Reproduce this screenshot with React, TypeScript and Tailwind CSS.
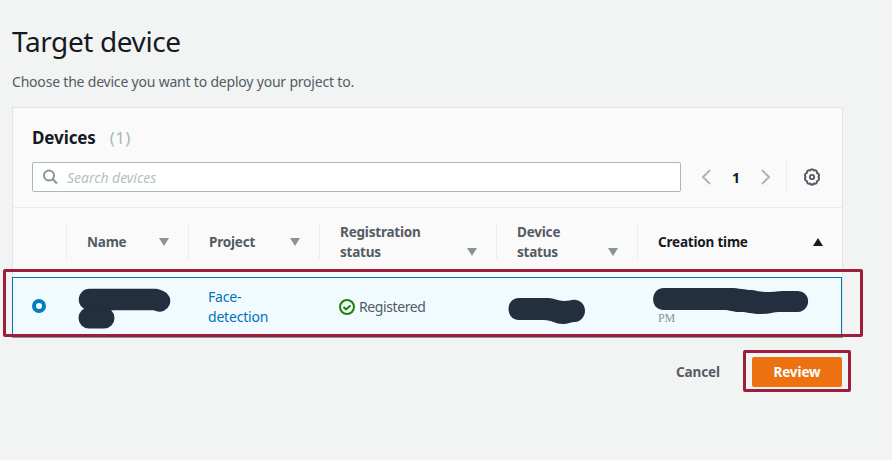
import React from "react";

type SortProps = { up?: boolean; className?: string };

function SortArrow({ up, className = "" }: SortProps) {
  return (
    <svg width="10" height="8" viewBox="0 0 10 8" className={`shrink-0 ${className}`}>
      {up ? <path d="M5 0 10 8H0Z" fill="#16191f" /> : <path d="M0 0h10L5 8Z" fill="#879596" />}
    </svg>
  );
}

function Separator() {
  return <div className="h-[34px] w-px shrink-0 self-center bg-[#eaeded]" />;
}

function Toolbar() {
  return (
    <div className="flex h-[30px] items-center pl-5">
      <div className="flex h-[30px] w-[649px] items-center rounded-[2px] border border-[#aab7b8] bg-white pl-[9px]">
        <svg width="16" height="16" viewBox="0 0 16 16" fill="none" stroke="#879596" strokeWidth="2">
          <circle cx="7" cy="6.5" r="5" />
          <path d="m10.5 10 4.5 4.5" />
        </svg>
        <span className="ml-[9px] pt-px text-[14px] tracking-[-0.04px] text-[#b5c0c1] italic">Search devices</span>
      </div>
      <svg width="10" height="16" viewBox="0 0 10 16" fill="none" stroke="#aab7b8" strokeWidth="2" className="ml-5">
        <path d="M9 1 2 8l7 7" />
      </svg>
      <span className="w-[50px] text-center text-[14px] font-bold text-[#16191f]">1</span>
      <svg width="10" height="16" viewBox="0 0 10 16" fill="none" stroke="#aab7b8" strokeWidth="2">
        <path d="m1 1 7 7-7 7" />
      </svg>
      <div className="ml-[15px] h-[30px] w-px bg-[#eaeded]" />
      <svg width="18" height="18" viewBox="0.6 0.6 16.8 16.8" fill="none" stroke="#545b64" className="ml-4">
        <path
          d="M7.1 2.9Q9 .7 10.9 2.9Q13.8 2.3 13.7 5.2Q16.5 6.3 15.1 9Q16.5 11.7 13.8 12.8Q13.8 15.7 10.9 15.1Q9 17.3 7.1 15.1Q4.2 15.7 4.2 12.8Q1.5 11.7 2.9 9Q1.5 6.3 4.2 5.2Q4.2 2.3 7.1 2.9Z"
          strokeWidth="1.9"
          strokeLinejoin="round"
        />
        <circle cx="9" cy="9" r="2" strokeWidth="1.8" />
      </svg>
    </div>
  );
}

function TableHead() {
  return (
    <div className="flex h-[70px] items-center border-t border-[#eaeded] pb-[2px] text-[13.5px] leading-5 font-bold tracking-[-0.2px] text-[#545b64]">
      <div className="w-[54px]" />
      <Separator />
      <div className="flex w-[121px] items-center justify-between pr-[19px] pl-5">
        <span>Name</span>
        <SortArrow />
      </div>
      <Separator />
      <div className="flex w-[130px] items-center justify-between pr-[19px] pl-5">
        <span>Project</span>
        <SortArrow />
      </div>
      <Separator />
      <div className="flex w-[176px] items-end justify-between pr-[19px] pl-5">
        <span>Registration<br />status</span>
        <SortArrow className="mb-[6px]" />
      </div>
      <Separator />
      <div className="flex w-[140px] items-end justify-between pr-[19px] pl-5">
        <span>Device<br />status</span>
        <SortArrow className="mb-[6px]" />
      </div>
      <Separator />
      <div className="flex flex-1 items-center justify-between pr-[19px] pl-5 text-[#16191f]">
        <span>Creation time</span>
        <SortArrow up />
      </div>
    </div>
  );
}

function DeviceRow() {
  return (
    <div className="flex h-[60px] items-center border border-[#0073bb] bg-[#f1faff] text-[14px] leading-5 tracking-[-0.2px]">
      <div className="w-[65px] pb-[2px] pl-[19px]">
        <div className="h-[14px] w-[14px] rounded-full border-[4px] border-[#007dbc] bg-white" />
      </div>
      <div className="w-[130px]">
        <svg width="94" height="42" viewBox="0 0 94 42" fill="none" stroke="#232f3e" strokeLinecap="round" strokeLinejoin="round" className="mt-1">
          <path d="M11.5 11.5h66l4 1.5" strokeWidth="21.5" />
          <path d="M11 30h15" strokeWidth="21" />
        </svg>
      </div>
      <div className="w-[131px] text-[#0073bb]">Face-<br />detection</div>
      <div className="flex w-[169px] items-center">
        <svg width="16" height="16" viewBox="0 0 16 16" fill="none" stroke="#1d8102" strokeWidth="2">
          <circle cx="8" cy="8" r="7" />
          <path d="m4.5 8 2.5 2.5 4.5-4" />
        </svg>
        <span className="ml-1 tracking-[-0.4px] text-[#545b64]">Registered</span>
      </div>
      <div className="w-[145px]">
        <svg width="78" height="27" viewBox="0 0 78 27" className="mt-[7px]">
          <path d="M11 1h29c6 0 10 3 16 3s8-2 12-1c6 1 9 6 9 11 0 6-5 11-10 11-4 0-7 2-12 2-8 0-11-4-19-4H11C-3 23-3 1 11 1Z" fill="#232f3e" />
        </svg>
      </div>
      <div className="flex flex-col">
        <svg width="156" height="26" viewBox="0 0 156 26" className="-mt-[2px]">
          <path d="M11 0h66c9 0 15 2 22 2 6 1 8 2 16 2s9-1 16-1h14c14 1 13 20 0 21h-17c-9 0-10 2-20 2S95 24 87 24s-9-2-17-2H11C-4 22-3 0 11 0Z" fill="#232f3e" />
        </svg>
        <span className="-mt-[3px] ml-[5px] h-[14px] font-['Liberation_Serif',serif] text-[12px] leading-[14px] tracking-[-0.2px] text-[#879596]">PM</span>
      </div>
    </div>
  );
}

export default function App() {
  return (
    <main className="relative h-[460px] w-[892px] overflow-hidden bg-[#f2f3f3] pl-3 font-['Noto_Sans','Open_Sans',sans-serif]">
      <h1 className="pt-[23px] text-[28px] leading-9 text-[#16191f]"><span className="tracking-[-0.4px]">Target device</span></h1>
      <p className="mt-[13px] text-[14px] leading-5 tracking-[-0.2px] text-[#545b64]">Choose the device you want to deploy your project to.</p>
      <section className="mt-[15px] h-[230px] w-[831px] border border-[#e1e4e4] bg-[#fafafa] shadow-[0_1px_0_#879596]">
        <div className="-ml-px">
          <h2 className="flex h-[54px] items-center pt-[6px] pl-5 text-[17px] font-bold tracking-[-0.1px] text-[#16191f]">
            Devices<span className="ml-[14px] text-[17px] font-normal tracking-[0.3px] text-[#aab7b8]">(1)</span>
          </h2>
          <Toolbar />
          <div className="mt-[15px]"><TableHead /></div>
          <DeviceRow />
        </div>
      </section>
      <footer className="mt-5 flex h-[30px] w-[830px] items-center justify-end text-[13.5px] font-bold tracking-[-0.1px]">
        <span className="mr-8 text-[#545b64]">Cancel</span>
        <button className="h-[30px] w-[90px] rounded-[2px] bg-[#ec7211] text-white">Review</button>
      </footer>
      <div className="absolute top-[269px] left-[3px] h-[68px] w-[860px] rounded-[2px] border-[3px] border-[#9b1f3c]" />
      <div className="absolute top-[350px] left-[743px] h-[42px] w-[108px] rounded-[2px] border-[3px] border-[#9b1f3c]" />
    </main>
  );
}
